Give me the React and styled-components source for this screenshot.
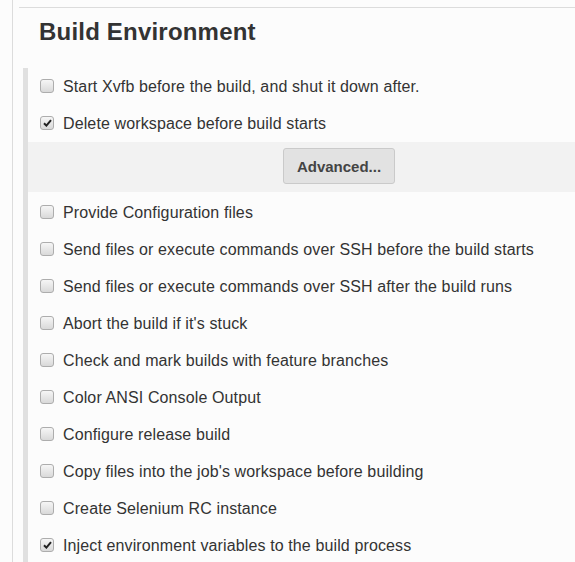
import styled, { createGlobalStyle } from 'styled-components'

const GlobalStyle = createGlobalStyle`
  html, body {
    margin: 0;
    padding: 0;
    background: #fcfcfc;
    font-family: 'Liberation Sans', Arial, sans-serif;
    color: #333;
  }
`

const Page = styled.div`
  margin-left: 12px;
  min-height: 562px;
  border-left: 1px solid #dcdcdc;
  padding-left: 6px;
  padding-top: 7px;
  box-sizing: border-box;
`

const Section = styled.section`
  border-top: 1px solid #dcdcdc;
`

const Heading = styled.h2`
  margin: 0;
  padding: 10px 0 0 20px;
  height: 50px;
  font-size: 24px;
  font-weight: bold;
  letter-spacing: 0.2px;
  color: #333;
  line-height: 28px;
`

const Body = styled.div`
  margin-left: 4px;
  border-left: 5px solid #e0e0e0;
`

const Row = styled.label`
  display: flex;
  align-items: center;
  height: 37px;
  padding-left: 12px;
  font-size: 16px;
  letter-spacing: 0.12px;
  color: #333;
  cursor: pointer;
`

const Box = styled.span`
  width: 14px;
  height: 14px;
  box-sizing: border-box;
  margin-right: 9px;
  margin-top: -2px;
  border: 1px solid #adadad;
  border-radius: 3px;
  background: linear-gradient(#f6f6f6, #d9d9d9);
  display: flex;
  align-items: center;
  justify-content: center;
  flex-shrink: 0;
`

const Advanced = styled.div`
  display: flex;
  justify-content: center;
  align-items: center;
  height: 50px;
  margin-bottom: 2px;
  background: #f2f2f2;
  padding-left: 75px;
`

const Button = styled.button`
  font-family: 'Liberation Sans', Arial, sans-serif;
  font-size: 15px;
  font-weight: bold;
  color: #444;
  background: #e2e2e2;
  border: 1px solid #cacaca;
  border-radius: 3px;
  width: 112px;
  height: 36px;
  padding: 0;
  margin-top: -2px;
`

function Checkbox({ checked }) {
  return (
    <Box>
      {checked && (
        <svg width="9" height="8" viewBox="0 0 9 8">
          <path d="M1 4.2 L3.4 6.6 L8 1.2" fill="none" stroke="#222" strokeWidth="2" />
        </svg>
      )}
    </Box>
  )
}

const before = [
  { label: 'Start Xvfb before the build, and shut it down after.' },
  { label: 'Delete workspace before build starts', checked: true },
]

const after = [
  { label: 'Provide Configuration files' },
  { label: 'Send files or execute commands over SSH before the build starts' },
  { label: 'Send files or execute commands over SSH after the build runs' },
  { label: "Abort the build if it's stuck" },
  { label: 'Check and mark builds with feature branches' },
  { label: 'Color ANSI Console Output' },
  { label: 'Configure release build' },
  { label: "Copy files into the job's workspace before building" },
  { label: 'Create Selenium RC instance' },
  { label: 'Inject environment variables to the build process', checked: true },
]

export default function App() {
  return (
    <>
      <GlobalStyle />
      <Page>
        <Section>
          <Heading>Build Environment</Heading>
          <Body>
            {before.map((o) => (
              <Row key={o.label}>
                <Checkbox checked={o.checked} />
                {o.label}
              </Row>
            ))}
            <Advanced>
              <Button>Advanced...</Button>
            </Advanced>
            {after.map((o) => (
              <Row key={o.label}>
                <Checkbox checked={o.checked} />
                {o.label}
              </Row>
            ))}
          </Body>
        </Section>
      </Page>
    </>
  )
}
